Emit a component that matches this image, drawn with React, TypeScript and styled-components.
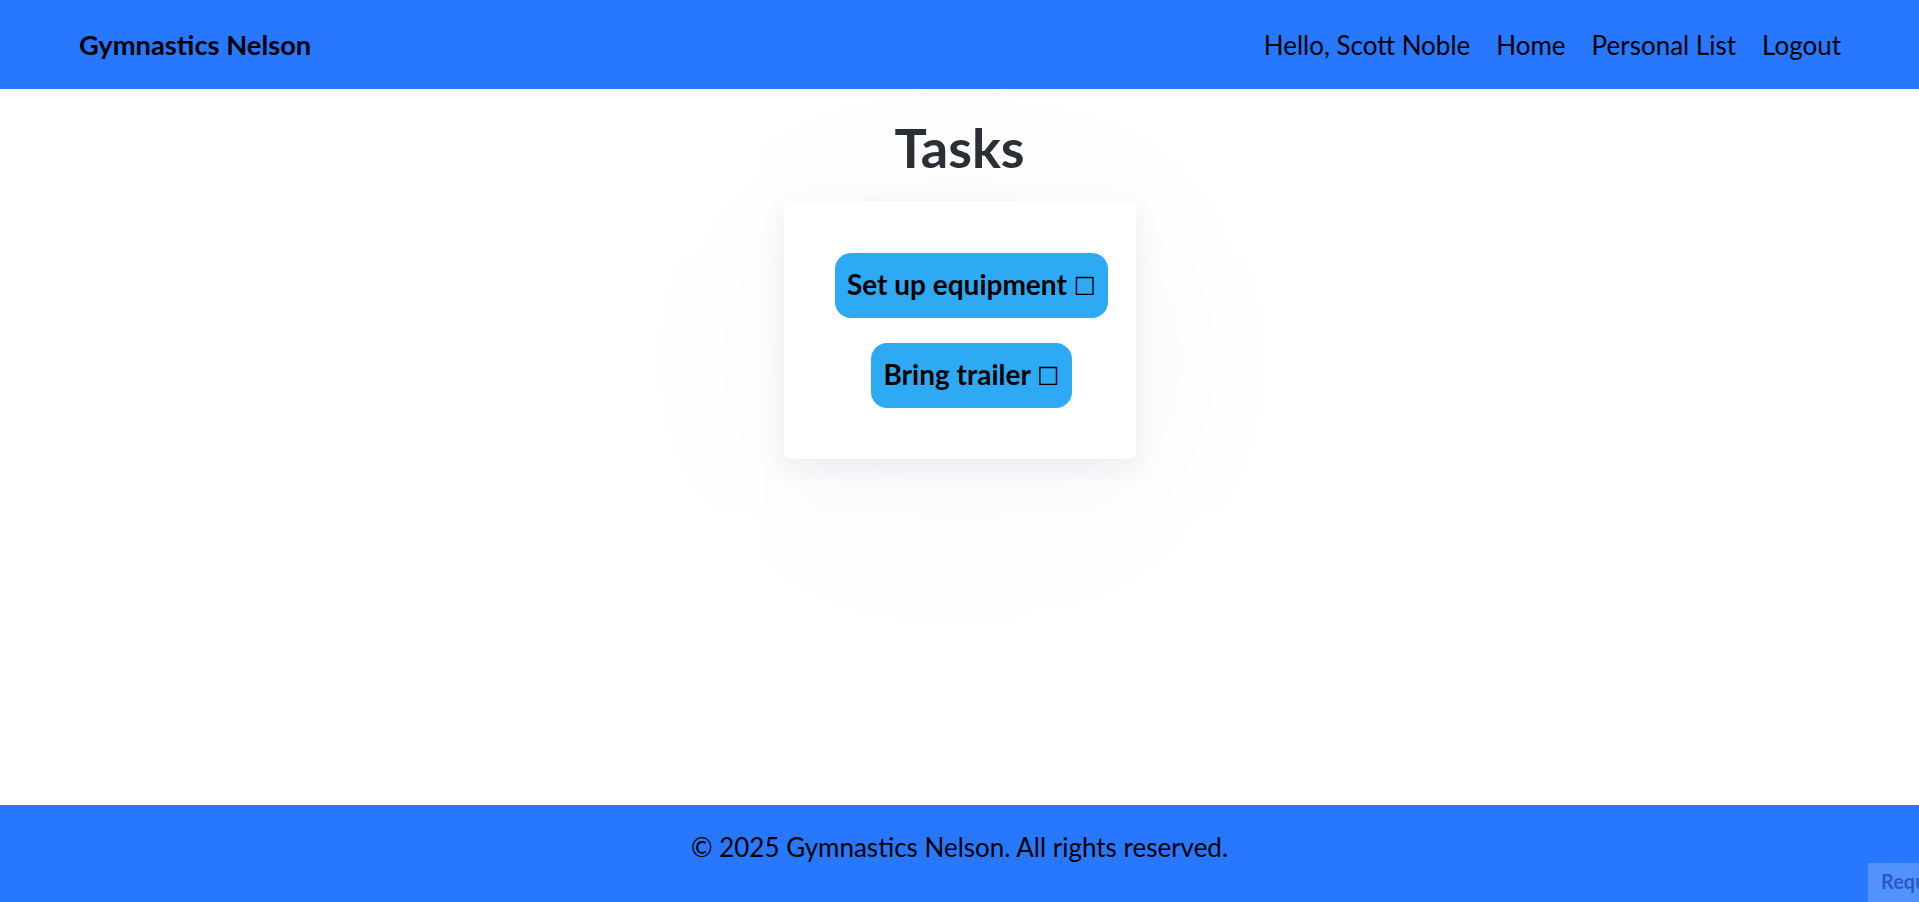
import styled, { createGlobalStyle } from "styled-components";

const GlobalStyle = createGlobalStyle`
  html, body {
    margin: 0;
    padding: 0;
    overflow-x: hidden;
  }
  body {
    font-family: "Segoe UI", Lato, "Noto Sans", sans-serif;
    color: #000;
    background: #fff;
  }
  * {
    box-sizing: border-box;
  }
`;

const tasks = ["Set up equipment", "Bring trailer"];

function App() {
  return (
    <Page>
      <GlobalStyle />
      <Header>
        <Brand>Gymnastics Nelson</Brand>
        <Nav>
          <NavItem>Hello, Scott Noble</NavItem>
          <NavItem>Home</NavItem>
          <NavItem>Personal List</NavItem>
          <NavItem>Logout</NavItem>
        </Nav>
      </Header>
      <Main>
        <Title>Tasks</Title>
        <Card>
          <TaskList>
            {tasks.map((t) => (
              <Task key={t}>
                {t} <Box>☐</Box>
              </Task>
            ))}
          </TaskList>
        </Card>
      </Main>
      <Footer>© 2025 Gymnastics Nelson. All rights reserved.</Footer>
      <RequestTab>Request</RequestTab>
    </Page>
  );
}

export default App;

const Page = styled.div`
  min-height: 100vh;
  display: flex;
  flex-direction: column;
`;

const Header = styled.header`
  height: 89px;
  background: #2777ff;
  display: flex;
  align-items: center;
  justify-content: space-between;
  padding: 0 78px 0 79px;
`;

const Brand = styled.div`
  font-size: 27.3px;
  font-weight: 700;
`;

const Nav = styled.nav`
  display: flex;
  gap: 26px;
`;

const NavItem = styled.a`
  font-size: 26px;
  color: #000;
  cursor: pointer;
`;

const Main = styled.main`
  flex: 1;
  display: flex;
  flex-direction: column;
  align-items: center;
`;

const Title = styled.h1`
  margin: 27px 0 20px;
  font-size: 54px;
  line-height: 1.2;
  font-weight: 700;
  color: #2b2f36;
`;

const Card = styled.div`
  width: 352px;
  padding: 52px 24px 51px 48px;
  background: #fff;
  border-radius: 6px;
  box-shadow: 0 8px 28px rgba(20, 30, 80, 0.07),
    0 30px 220px rgba(20, 30, 80, 0.045);
`;

const TaskList = styled.ul`
  list-style: none;
  margin: 0;
  padding: 0;
  display: flex;
  flex-direction: column;
  align-items: center;
  gap: 25px;
`;

const Task = styled.li`
  background: #2eaaf5;
  border-radius: 16px;
  padding: 14px 12px;
  font-size: 28px;
  line-height: 35px;
  font-weight: 700;
  white-space: nowrap;
  cursor: pointer;
`;

const Box = styled.span`
  font-family: "DejaVu Sans", sans-serif;
  font-weight: 400;
  font-size: 25px;
`;

const Footer = styled.footer`
  height: 97px;
  padding-top: 24px;
  background: #2777ff;
  text-align: center;
  font-size: 26px;
  line-height: 36px;
`;

const RequestTab = styled.div`
  position: fixed;
  left: 1868px;
  bottom: 0;
  height: 39px;
  padding: 6px 13px;
  background: rgba(255, 255, 255, 0.2);
  color: rgba(25, 60, 160, 0.65);
  font-size: 20px;
  font-weight: 700;
  white-space: nowrap;
`;
